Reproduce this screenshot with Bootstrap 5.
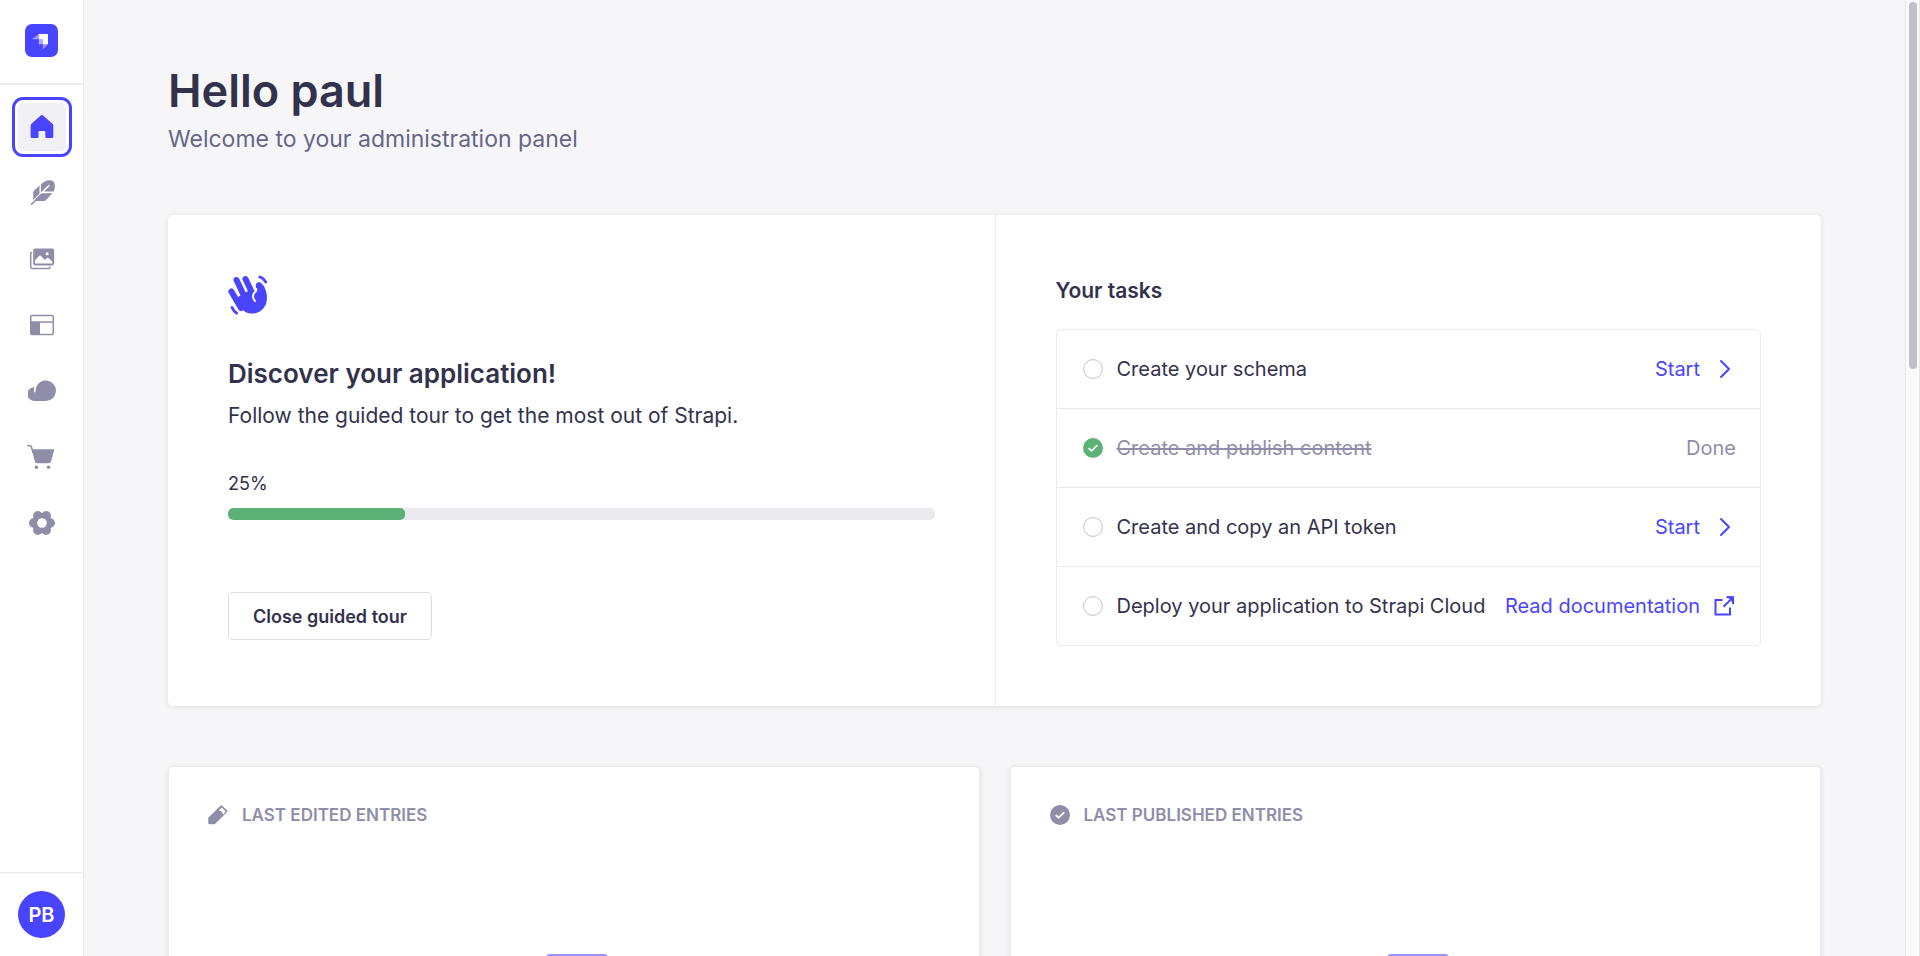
<!DOCTYPE html>
<html lang="en">
<head>
<meta charset="utf-8">
<meta name="viewport" content="width=device-width, initial-scale=1">
<title>Homepage | Strapi</title>
<link href="https://cdn.jsdelivr.net/npm/bootstrap@5.3.0/dist/css/bootstrap.min.css" rel="stylesheet">
<style>
:root{--p600:#4945ff;--n100:#f6f6f9;--n150:#eaeaef;--n200:#dcdce4;--n300:#c0c0cf;--n500:#8e8ea9;--n600:#666687;--n800:#32324d;--ok:#5cb176}
body{font-family:Inter,"Liberation Sans",sans-serif;font-size:20px;line-height:30px;color:var(--n800);background:var(--n100)}
a{text-decoration:none;color:var(--p600)}
.side-nav{width:84px;border-right:1px solid var(--n150)}
.side-logo{height:85px;padding-top:24px;border-bottom:2px solid var(--n150)}
.side-list{padding-top:18px}
.side-link{width:48px;height:48px;border-radius:5px;color:var(--n500);margin-bottom:18px}
.side-link.active{background:#f0f0f5;color:var(--p600);outline:3px solid var(--p600);outline-offset:3px}
.side-user{height:84px;border-top:1px solid var(--n150)}
.avatar{width:47px;height:47px;border:0;background:var(--p600);color:#fff;font-size:20px;font-weight:600}
.page-body{padding:60px 84px}
.scroll-pane{overflow-y:auto;scrollbar-width:none}
.scroll-track{width:15px;padding:2px 2px 2px 3px;background:#fafafa;border-left:1px solid #e8e8e8;border-right:1px solid #e8e8e8}
.scroll-thumb{height:38.5%;width:8px;background:#c1c0c6;border-radius:4px}
h1{font-size:45px;line-height:62px;font-weight:600;margin:0}
.lead-in{font-size:23px;line-height:34px;color:var(--n600)}
.panel-box{background:#fff;border-radius:5px;box-shadow:0 1px 5px rgba(33,33,52,.1)}
.tour{margin-top:59px}
.tour-half{padding:60px}
.tour-half + .tour-half{border-left:1px solid var(--n150)}
.tour h2{font-size:26px;line-height:36px;font-weight:600;margin:41px 0 9px}
.tour h3{font-size:21px;line-height:32px;font-weight:600;margin:0 0 22px}
.intro{font-size:21px}
.pct{font-size:18px;line-height:24px;margin-top:41px}
.progress{--bs-progress-height:12px;--bs-progress-bg:var(--n150);--bs-progress-border-radius:5px;--bs-progress-bar-bg:var(--ok);margin-top:12px}
.progress-bar{border-radius:5px}
.btn-tour{margin-top:72px;height:48px;padding:0 24px;font-size:18px;font-weight:600;color:var(--n800);background:#fff;border:1px solid var(--n200);border-radius:5px}
.tasks{border:1px solid var(--n150);border-radius:5px}
.task{height:78px;padding:0 24px 0 26px}
.task + .task{height:79px;border-top:1px solid var(--n150)}
.task .dot{margin-right:14px}
.task .go{margin:0 2px 0 14px}
.task.done{color:var(--n500)}
.entries{margin-top:60px;gap:30px}
.entry-card{border:1px solid var(--n150);min-height:1650px;padding:32px 39px}
.entry-head{gap:14px;color:var(--n500)}
.entry-head h2{font-size:17px;line-height:32px;font-weight:600;margin:0}
.blank{margin-top:123px}
</style>
</head>
<body>
<div class="d-flex vh-100">
  <nav class="side-nav bg-white d-flex flex-column align-items-center flex-shrink-0" aria-label="Main">
    <div class="side-logo w-100 text-center lh-1">
      <svg width="33" height="33" viewBox="0 0 33 33" aria-hidden="true"><rect width="33" height="33" rx="7" fill="#4945ff"/><g fill="#fff"><path d="M13.8 10h8.6q.6 0 .6.6v9.7h-5.2v-4.6q0-.5-.5-.5h-3.5z"/><path opacity=".55" d="M13.8 15.2h3.5q.5 0 .5.5v4.6h-3.5q-.5 0-.5-.5z"/><path opacity=".45" d="M13.8 10v5.2H7.3q-.4 0-.1-.3zM17.8 20.3H23l-4.9 5q-.3.3-.3-.1z"/></g></svg>
    </div>
    <div class="side-list d-flex flex-column align-items-center">
      <a class="side-link active d-flex align-items-center justify-content-center" href="#" aria-label="Home"><svg width="28" height="28" viewBox="0 0 28 28" fill="currentColor"><path d="M12.7 2.6q1.200-1 2.400 0l9.300 8.200q.9.800.9 1.900v11q0 1.300-1.300 1.300h-5.400q-1.300 0-1.300-1.300v-4.700q0-1-1-1h-4.800q-1 0-1 1v4.700q0 1.300-1.300 1.300H3.900q-1.300 0-1.300-1.300v-11q0-1.100.9-1.900z"/></svg></a>
      <a class="side-link d-flex align-items-center justify-content-center" href="#" aria-label="Content Manager"><svg width="28" height="28" viewBox="0 1 28 28" fill="currentColor"><path d="M5.200 14.600q0-.9.600-1.500l5.700-5.700v8.400l-6.300 6.300zM12.900 14.200V6.500q4-4.200 8.600-4.300 5.200 0 5.400 5.200.1 3.600-1.300 6.200H15.300zM14.200 15.300h10.200l-6.600 6.900q-1 .9-2.300.9H6.700z"/><path d="M14 14.500l7.300-7.300" stroke="#fff" stroke-width="1.600" fill="none"/><path d="M3.600 26.200l9.800-9.800" stroke="currentColor" stroke-width="1.600" stroke-linecap="round"/></svg></a>
      <a class="side-link d-flex align-items-center justify-content-center" href="#" aria-label="Media Library"><svg width="28" height="28" viewBox="0 0 28 28"><path d="M4.200 7.600H3.900Q2.700 7.600 2.700 8.800v13.300q0 1.500 1.500 1.500h16.400q1.500 0 1.500-1.500v-.6" fill="none" stroke="currentColor" stroke-width="1.500"/><rect x="5.200" y="3.600" width="20.900" height="16.800" rx="1.800" fill="currentColor"/><path d="M7 18.600v-3.400l4.200-4.400q.8-.8 1.600 0l4 4.300 2.300-2q.8-.6 1.600.1l3.600 3.500v1.900z" fill="#fff"/><circle cx="19.200" cy="8.700" r="1.500" fill="#fff"/></svg></a>
      <a class="side-link d-flex align-items-center justify-content-center" href="#" aria-label="Content-Type Builder"><svg width="28" height="28" viewBox="0 0 28 28"><rect x="2.700" y="4.400" width="22.600" height="19" rx="1.200" fill="none" stroke="currentColor" stroke-width="1.500"/><path d="M2.700 11h22.600" stroke="currentColor" stroke-width="1.500"/><path d="M2.700 11H12v12.400H2.700z" fill="currentColor"/></svg></a>
      <a class="side-link d-flex align-items-center justify-content-center" href="#" aria-label="Deploy"><svg width="28" height="28" viewBox="0 0 28 28"><path d="M6.900 24A6.900 6.900 0 0 1 5.800 10.200q.6-.1.500.5-.5 2-.2 4.100.1.600.7.600t.8-.8A10.200 10.200 0 1 1 17.800 24z" fill="currentColor"/></svg></a>
      <a class="side-link d-flex align-items-center justify-content-center" href="#" aria-label="Marketplace"><svg class="overflow-visible" width="28" height="28" viewBox="0 0 28 28"><path d="M-.2 2.700h2.100q1 0 1.300.9L5 9" fill="none" stroke="currentColor" stroke-width="1.600" stroke-linecap="round"/><path d="M3.600 6.200h21.500q1.200 0 .9 1.200l-3 11.100q-.5 1.800-2.300 1.800H9.200q-1.800 0-2.300-1.800z" fill="currentColor"/><circle cx="8.400" cy="24.300" r="1.700" fill="currentColor"/><circle cx="20.500" cy="24.300" r="1.700" fill="currentColor"/></svg></a>
      <a class="side-link d-flex align-items-center justify-content-center" href="#" aria-label="Settings"><svg width="28" height="28" viewBox="0 0 28 28" fill="currentColor"><circle cx="14" cy="14" r="10.300"/><circle cx="22.300" cy="14" r="4.700"/><circle cx="5.700" cy="14" r="4.700"/><circle cx="18.200" cy="6.700" r="4.700"/><circle cx="9.800" cy="6.700" r="4.700"/><circle cx="18.200" cy="21.300" r="4.700"/><circle cx="9.800" cy="21.300" r="4.700"/><circle cx="14" cy="14" r="4.800" fill="#fff"/></svg></a>
    </div>
    <div class="side-user w-100 mt-auto d-flex align-items-center justify-content-center">
      <button type="button" class="avatar rounded-circle p-0">PB</button>
    </div>
  </nav>
  <main class="scroll-pane flex-grow-1">
    <div class="page-body">
      <h1>Hello paul</h1>
      <p class="lead-in mb-0">Welcome to your administration panel</p>

      <section class="panel-box tour row g-0">
        <div class="tour-half col-6">
          <svg class="d-block" width="40" height="40" viewBox="0 0 40 40" fill="none" stroke="#4945ff" stroke-linecap="round"><path stroke-width="6" d="M3.400 16.500L13 33M8.500 5L18 25M17.500 4l9 19"/><path stroke-width="6.400" d="M31 10.500l.5 9"/><path d="M10 22l10-6 5.500-1 6 3 3-9q4.500 6 4.500 15a15 15 0 0 1-28.500 6z" fill="#4945ff" stroke="none"/><path stroke="#fff" stroke-width="2" d="M28.300 14q.2 1.800-1.500 3.200-3.800 4.300.3 8.900"/><path stroke-width="2.800" d="M31.800 2q3.800 1.200 5.900 5M4 32.500q1.500 3.500 4.600 5.700"/></svg>
          <h2>Discover your application!</h2>
          <p class="intro mb-0">Follow the guided tour to get the most out of Strapi.</p>
          <div class="pct" id="pct">25%</div>
          <div class="progress" role="progressbar" aria-labelledby="pct" aria-valuenow="25" aria-valuemin="0" aria-valuemax="100"><div class="progress-bar" style="width:25%"></div></div>
          <button type="button" class="btn btn-tour">Close guided tour</button>
        </div>
        <div class="tour-half col-6">
          <h3>Your tasks</h3>
          <div class="tasks">
            <div class="task d-flex align-items-center"><svg class="dot" width="20" height="20"><circle cx="10" cy="10" r="9.400" fill="none" stroke="#c0c0cf"/></svg><span>Create your schema</span><a class="ms-auto d-flex align-items-center" href="#">Start<svg class="go" width="20" height="20" viewBox="0 0 20 20" fill="none" stroke="currentColor" stroke-width="2" stroke-linecap="round" stroke-linejoin="round"><path d="M7 2l8 8-8 8"/></svg></a></div>
            <div class="task done d-flex align-items-center"><svg class="dot" width="20" height="20"><circle cx="10" cy="10" r="10" fill="#5cb176"/><path d="M6 10.500l2.500 2.400L14 7.500" fill="none" stroke="#fff" stroke-width="1.700" stroke-linecap="round" stroke-linejoin="round"/></svg><s>Create and publish content</s><span class="ms-auto">Done</span></div>
            <div class="task d-flex align-items-center"><svg class="dot" width="20" height="20"><circle cx="10" cy="10" r="9.400" fill="none" stroke="#c0c0cf"/></svg><span>Create and copy an API token</span><a class="ms-auto d-flex align-items-center" href="#">Start<svg class="go" width="20" height="20" viewBox="0 0 20 20" fill="none" stroke="currentColor" stroke-width="2" stroke-linecap="round" stroke-linejoin="round"><path d="M7 2l8 8-8 8"/></svg></a></div>
            <div class="task d-flex align-items-center"><svg class="dot" width="20" height="20"><circle cx="10" cy="10" r="9.400" fill="none" stroke="#c0c0cf"/></svg><span>Deploy your application to Strapi Cloud</span><a class="ms-auto d-flex align-items-center" href="#">Read documentation<svg class="go" width="20" height="20" viewBox="0 0 20 20" fill="none" stroke="currentColor" stroke-width="2"><path d="M8.500 4H1.500v14.500h14.500V11.500M12.500 1.300H19V8M18.700 1.600L9.500 10.800"/><path d="M13 .5h6.700v6.700z" fill="currentColor" stroke="none"/></svg></a></div>
          </div>
        </div>
      </section>

      <div class="entries d-flex">
        <section class="panel-box entry-card flex-fill w-50 d-flex flex-column">
          <div class="entry-head d-flex align-items-center"><svg width="20" height="20" viewBox="0 0 20 20" fill="currentColor"><path d="M12.200.9q1.100-1.100 2.200 0l4.500 4.400q1 1 0 2L6.700 19.200H1.500q-1.200 0-1.200-1.200v-5.200z"/><path d="M13.600 2.600l4.200 4-2.700 2.800q-.9-3.300-4.300-4z" fill="#fff"/></svg><h2>LAST EDITED ENTRIES</h2></div>
          <svg class="blank align-self-center" width="68" height="90" viewBox="0 0 68 90" aria-hidden="true"><path d="M6 90V4q0-4 4-4h54q4 0 4 4v86z" fill="#9593ff"/></svg>
        </section>
        <section class="panel-box entry-card flex-fill w-50 d-flex flex-column">
          <div class="entry-head d-flex align-items-center"><svg width="20" height="20"><circle cx="10" cy="10" r="10" fill="#8e8ea9"/><path d="M6.200 10.500l2.500 2.200L13.800 7.600" fill="none" stroke="#fff" stroke-width="1.800" stroke-linecap="round" stroke-linejoin="round"/></svg><h2>LAST PUBLISHED ENTRIES</h2></div>
          <svg class="blank align-self-center" width="68" height="90" viewBox="0 0 68 90" aria-hidden="true"><path d="M6 90V4q0-4 4-4h54q4 0 4 4v86z" fill="#9593ff"/></svg>
        </section>
      </div>
    </div>
  </main>
  <div class="scroll-track flex-shrink-0" aria-hidden="true"><div class="scroll-thumb"></div></div>
</div>
<script src="https://cdn.jsdelivr.net/npm/bootstrap@5.3.0/dist/js/bootstrap.bundle.min.js"></script>
</body>
</html>
